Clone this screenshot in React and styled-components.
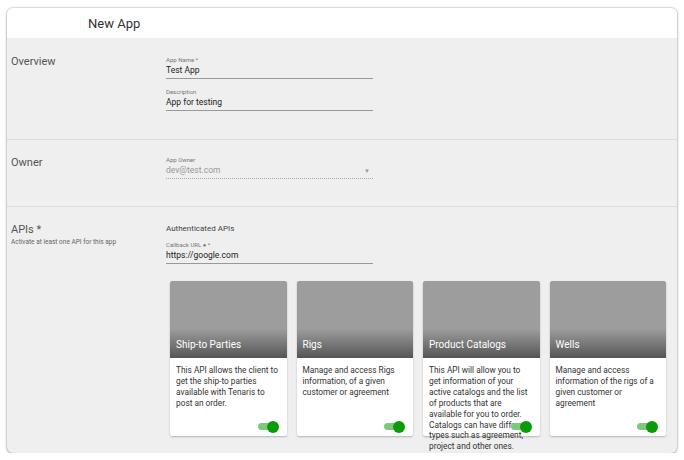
import React from "react";
import styled, { createGlobalStyle } from "styled-components";

const G = createGlobalStyle`
  body { margin:0; background:#fff; font-family: Roboto, "Liberation Sans", sans-serif; }
`;
const Frame = styled.div`
  margin:8px 0 0 7px; width:670px; height:445px; border-radius:6px; overflow:hidden;
  box-shadow:0 0 2px rgba(0,0,0,.45), 0 1px 3px rgba(0,0,0,.2); background:#efefef;
  display:flex; flex-direction:column;
`;
const Header = styled.div`
  height:30px; background:#fff; padding-left:81px; font-size:13px; color:#333;
  display:flex; align-items:center; flex-shrink:0;
`;
const Section = styled.div`
  display:flex; min-height:${p=>p.h}px; border-bottom:${p=>p.last?"none":"1px solid #dcdcdc"};
  box-sizing:border-box; flex-shrink:0;
`;
const Side = styled.div`
  width:159px; flex-shrink:0; padding:${p=>p.pt}px 0 0 4px; box-sizing:border-box;
`;
const SideTitle = styled.div` font-size:11px; color:#555; `;
const SideSub = styled.div` font-size:6.5px; color:#666; margin-top:2px; `;
const Main = styled.div` flex:1; padding-top:${p=>p.pt}px; `;
const Field = styled.div` width:207px; margin-bottom:${p=>p.mb||0}px; `;
const FLabel = styled.div` font-size:6px; color:#777; line-height:8px; `;
const FValue = styled.div`
  font-size:8.5px; color:${p=>p.dim?"#999":"#222"}; line-height:13px; padding-bottom:1px;
  border-bottom:1px ${p=>p.dim?"dotted #aaa":"solid #999"}; display:flex; justify-content:space-between; align-items:center;
`;
const Sub = styled.div` font-size:8px; color:#444; margin-bottom:8px; `;
const Cards = styled.div` display:flex; gap:10px; margin:17px 0 0 4px; `;
const Card = styled.div`
  width:116.5px; height:155px; background:#fff; border-radius:2px; box-shadow:0 1px 2px rgba(0,0,0,.25);
  display:flex; flex-direction:column; position:relative; flex-shrink:0;
`;
const Media = styled.div`
  height:77px; flex-shrink:0; background:linear-gradient(#9d9d9d 0, #9d9d9d 62%, #555 100%);
  display:flex; align-items:flex-end; padding:0 6px 8px; box-sizing:border-box;
  color:#fff; font-size:10px; border-radius:2px 2px 0 0;
`;
const Body = styled.div` padding:7px 6px 0; font-size:8.3px; line-height:10.9px; color:#333; `;
const Toggle = styled.div`
  position:absolute; right:12px; bottom:6px; width:17px; height:7px; border-radius:4px; background:#7cc97c;
  &::after{content:""; position:absolute; right:-4px; top:-2.5px; width:12px; height:12px; border-radius:50%; background:#0a9a0a;}
`;

const cards = [
  ["Ship-to Parties","This API allows the client to get the ship-to parties available with Tenaris to post an order."],
  ["Rigs","Manage and access Rigs information, of a given customer or agreement"],
  ["Product Catalogs","This API will allow you to get information of your active catalogs and the list of products that are available for you to order. Catalogs can have different types such as agreement, project and other ones."],
  ["Wells","Manage and access information of the rigs of a given customer or agreement"],
];

export default function App(){
  return (<>
    <G/>
    <Frame>
      <Header>New App</Header>
      <Section h={102}>
        <Side pt={17}><SideTitle>Overview</SideTitle></Side>
        <Main pt={18}>
          <Field mb={9}><FLabel>App Name *</FLabel><FValue>Test App</FValue></Field>
          <Field><FLabel>Description</FLabel><FValue>App for testing</FValue></Field>
        </Main>
      </Section>
      <Section h={67}>
        <Side pt={16}><SideTitle>Owner</SideTitle></Side>
        <Main pt={16}>
          <Field><FLabel>App Owner</FLabel><FValue dim>dev@test.com<span style={{fontSize:6,marginRight:3}}>▼</span></FValue></Field>
        </Main>
      </Section>
      <Section last h={246}>
        <Side pt={16}><SideTitle>APIs *</SideTitle><SideSub>Activate at least one API for this app</SideSub></Side>
        <Main pt={17}>
          <Sub>Authenticated APIs</Sub>
          <Field><FLabel>Callback URL ● *</FLabel><FValue>https://google.com</FValue></Field>
          <Cards>
            {cards.map(([t,d])=>(
              <Card key={t}><Media>{t}</Media><Body>{d}</Body><Toggle/></Card>
            ))}
          </Cards>
        </Main>
      </Section>
    </Frame>
  </>);
}
